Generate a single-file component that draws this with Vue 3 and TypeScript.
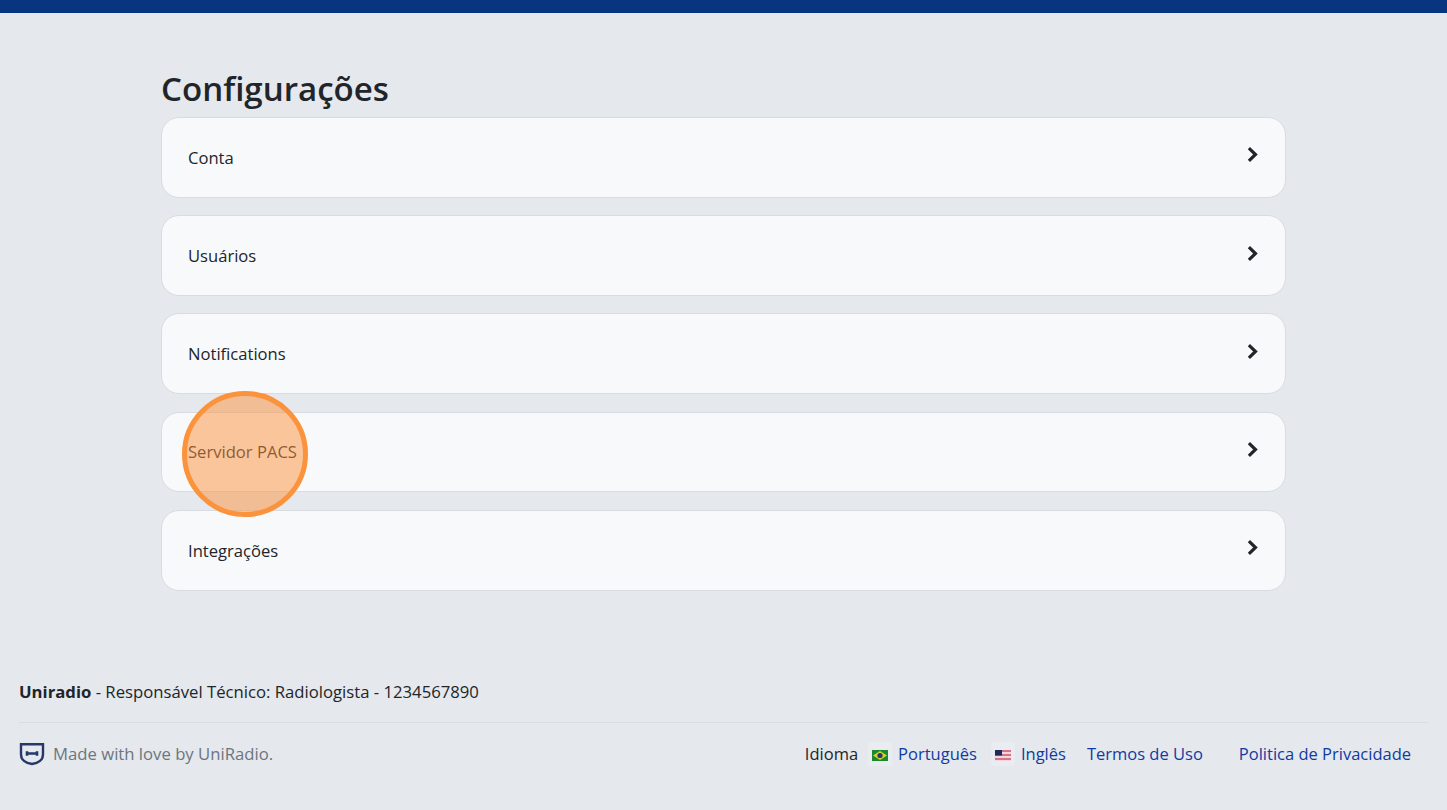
<script setup lang="ts">
const items: string[] = ['Conta', 'Usuários', 'Notifications', 'Servidor PACS', 'Integrações'];
</script>

<template>
  <div class="page">
    <div class="topbar"></div>
    <main class="content">
      <h1>Configurações</h1>
      <ul class="menu">
        <li v-for="item in items" :key="item" class="menu-card">
          <span>{{ item }}</span>
          <svg class="chevron" viewBox="0 0 16 16" aria-hidden="true">
            <path d="M4.6 2 10.8 8 4.6 14" fill="none" stroke="currentColor" stroke-width="3" />
          </svg>
        </li>
      </ul>
    </main>
    <footer class="footer">
      <p class="tech"><strong>Uniradio</strong> - Responsável Técnico: Radiologista - 1234567890</p>
      <div class="bottom">
        <div class="made">
          <svg class="shield" viewBox="0 0 26 24" aria-hidden="true">
            <path d="M2 2.2h22v10.3c0 5.5-5 8.5-11 9.5C7 21 2 18 2 12.5z" fill="none" stroke="#26386b" stroke-width="2.4" />
            <path d="M8 9.2v4.6M18 9.2v4.6M8 11.5h10" fill="none" stroke="#26386b" stroke-width="2.6" />
          </svg>
          <span>Made with love by UniRadio.</span>
        </div>
        <nav class="links">
          <span class="lang-label">Idioma</span>
          <span class="flag">
            <svg viewBox="0 0 16 11" aria-hidden="true">
              <rect width="16" height="11" fill="#1c8a2c" />
              <path d="M8 1 15 5.5 8 10 1 5.5z" fill="#d8d02a" />
              <circle cx="8" cy="5.5" r="2.6" fill="#1f3a78" />
            </svg>
          </span>
          <a class="lang-link">Português</a>
          <span class="flag us">
            <svg viewBox="0 0 16 11" aria-hidden="true">
              <rect width="16" height="11" fill="#f2d6dc" />
              <path d="M0 1h16M0 5h16M0 9h16" stroke="#c8566f" stroke-width="1.5" />
              <rect width="7" height="5.5" fill="#1c2a5e" />
            </svg>
          </span>
          <a class="lang-link">Inglês</a>
          <a class="terms">Termos de Uso</a>
          <a class="privacy">Politica de Privacidade</a>
        </nav>
      </div>
    </footer>
    <div class="click-marker"></div>
  </div>
</template>

<style>
body {
  margin: 0;
  background: #e5e8ed;
}
</style>

<style scoped>
.page {
  position: relative;
  height: 810px;
  overflow: hidden;
  display: flex;
  flex-direction: column;
  font-family: "Open Sans", "Noto Sans", sans-serif;
  color: #212529;
  background: #e5e8ed;
}

.topbar {
  height: 13px;
  flex: none;
  background: #08357f;
}

.content {
  width: 1125px;
  margin-left: 161px;
  padding-top: 54px;
  flex: 1;
}

h1 {
  margin: 0 0 6px;
  font-size: 33.1px;
  line-height: 44px;
  font-weight: 600;
}

.menu {
  list-style: none;
  margin: 0;
  padding: 0;
  display: flex;
  flex-direction: column;
  gap: 17.4px;
}

.menu-card {
  height: 80.8px;
  box-sizing: border-box;
  display: flex;
  align-items: center;
  justify-content: space-between;
  padding: 0 25px 0 26px;
  border: 1px solid #d8dbe0;
  border-radius: 18px;
  background: #f8f9fb;
  font-size: 16.6px;
}

.chevron {
  width: 17px;
  height: 17px;
  margin-top: -5px;
  margin-right: -1px;
  color: #212529;
}

.footer {
  flex: none;
  height: 139px;
  box-sizing: border-box;
  padding: 0 19px;
  font-size: 16.7px;
}

.tech {
  margin: 0;
  height: 52px;
  padding-top: 10px;
  box-sizing: border-box;
  line-height: 22px;
  border-bottom: 1px solid #d9dce1;
}

.tech strong {
  font-weight: 700;
}

.bottom {
  display: flex;
  justify-content: space-between;
  align-items: center;
  height: 62px;
  padding-right: 17px;
}

.made {
  display: flex;
  align-items: center;
  gap: 8px;
  color: #6c757d;
}

.made span {
  margin-bottom: 2px;
}

.shield {
  width: 26px;
  height: 24px;
}

.links {
  display: flex;
  align-items: center;
  line-height: 22px;
  font-size: 16.5px;
}

.lang-link,
.terms,
.privacy {
  color: #0f3ba3;
}

.lang-label {
  margin-right: 10px;
}

.flag {
  width: 24px;
  height: 24px;
  margin-right: 6px;
  display: grid;
  place-items: center;
  border-radius: 3px;
  background: #e9ecf0;
}

.flag svg {
  width: 16px;
  height: 11px;
  display: block;
  margin-top: 3px;
}

.flag.us {
  margin-left: 14px;
}

.terms {
  margin-left: 21px;
}

.privacy {
  margin-left: 36px;
}

.click-marker {
  position: absolute;
  left: 182px;
  top: 391px;
  width: 126px;
  height: 126px;
  box-sizing: border-box;
  border: 5.5px solid #fb923c;
  border-radius: 50%;
  background: rgba(251, 146, 60, 0.5);
}
</style>
